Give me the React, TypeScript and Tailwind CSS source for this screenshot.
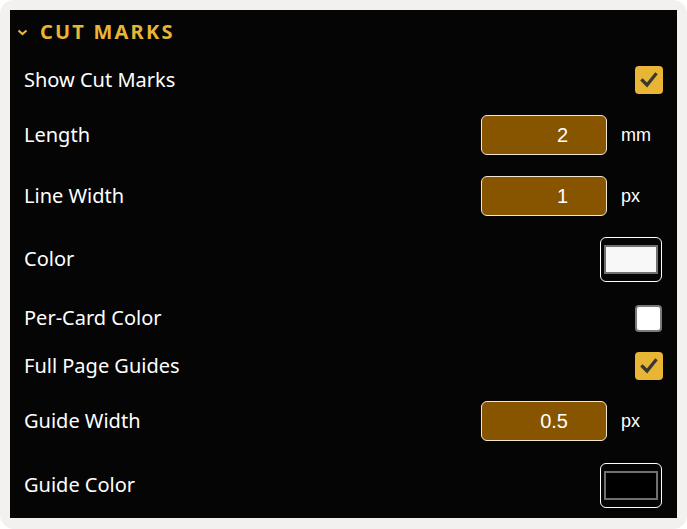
import { ReactNode } from 'react';

const label = "text-[20px] text-white font-['Noto_Sans',sans-serif]";

function Check() {
  return (
    <div className="w-[28px] h-[28px] rounded-[4px] bg-[#e8b535] flex items-center justify-center">
      <svg width="20" height="20" viewBox="0 0 20 20" fill="none">
        <path d="M3.5 10.5 L8 15 L16.5 4.5" stroke="#3a3630" strokeWidth="3.2" strokeLinecap="square" />
      </svg>
    </div>
  );
}

function NumField({ value, unit }: { value: string; unit: string }) {
  return (
    <div className="flex items-center">
      <div className="w-[126px] h-[40px] rounded-[6px] border border-[#f0e6d6] bg-[#875400] flex items-center justify-end pr-[38px] text-[20px] text-white font-['Liberation_Sans',sans-serif]">
        {value}
      </div>
      <span className="w-[70px] pl-[14px] text-[18px] text-white font-['Liberation_Sans',sans-serif]">{unit}</span>
    </div>
  );
}

function Swatch({ fill }: { fill: string }) {
  return (
    <div className="mr-[15px] w-[62px] h-[45px] rounded-[6px] border border-white flex items-center justify-center">
      <div className={`w-[54px] h-[29px] border-2 border-[#707070] ${fill}`}></div>
    </div>
  );
}

function Row({ h, name, children }: { h: string; name: string; children: ReactNode }) {
  return (
    <div className={`${h} flex items-center justify-between pl-[14px]`}>
      <span className={label}>{name}</span>
      {children}
    </div>
  );
}

export default function App() {
  return (
    <div className="w-[687px] h-[529px] bg-white">
      <div className="w-full h-full rounded-[14px] bg-[#f2f1ef] p-[10px] pb-[11px]">
        <div className="w-full h-full bg-[#050505]">
          <div className="h-[44px] flex items-center pl-[6px] gap-[11px]">
            <svg width="13" height="9" viewBox="0 0 13 9" fill="none">
              <path d="M2.5 2.5 L6.5 6 L10.5 2.5" stroke="#e8b535" strokeWidth="2.2" />
            </svg>
            <span className="text-[20px] font-bold tracking-[2.2px] text-[#e8b535] font-['Noto_Sans',sans-serif]">CUT MARKS</span>
          </div>
          <Row h="h-[52px]" name="Show Cut Marks">
            <div className="mr-[14px]"><Check /></div>
          </Row>
          <Row h="h-[58px]" name="Length">
            <NumField value="2" unit="mm" />
          </Row>
          <Row h="h-[64px]" name="Line Width">
            <NumField value="1" unit="px" />
          </Row>
          <Row h="h-[62px]" name="Color">
            <Swatch fill="bg-[#f8f8f8]" />
          </Row>
          <Row h="h-[56px]" name="Per-Card Color">
            <div className="mr-[15px] w-[27px] h-[27px] rounded-[4px] border-2 border-[#7a7a7a] bg-white"></div>
          </Row>
          <Row h="h-[40px]" name="Full Page Guides">
            <div className="mr-[14px]"><Check /></div>
          </Row>
          <Row h="h-[70px]" name="Guide Width">
            <NumField value="0.5" unit="px" />
          </Row>
          <Row h="h-[58px]" name="Guide Color">
            <Swatch fill="bg-black" />
          </Row>
        </div>
      </div>
    </div>
  );
}
